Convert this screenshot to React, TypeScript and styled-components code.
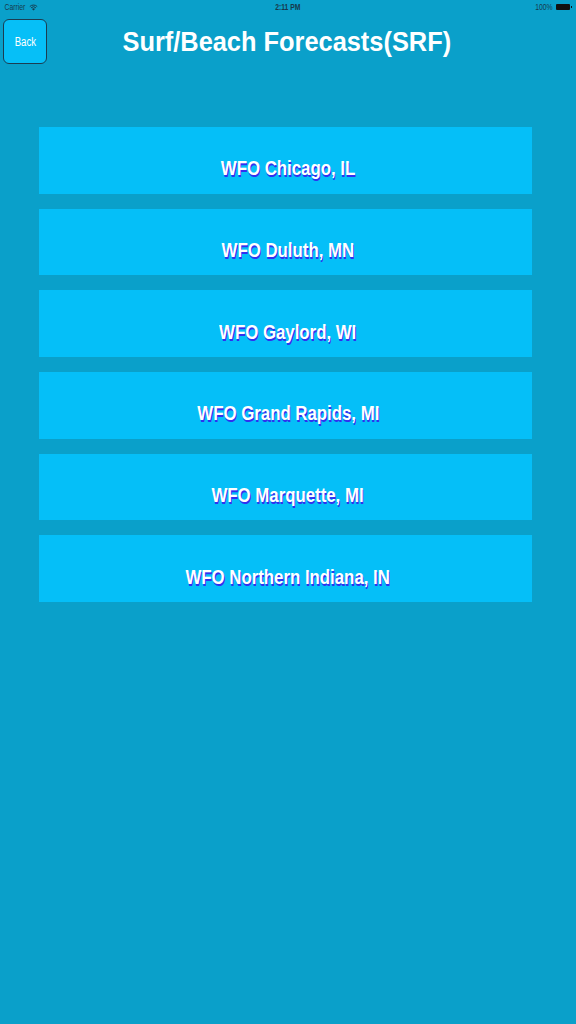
import React from "react";
import styled, { createGlobalStyle } from "styled-components";

const Global = createGlobalStyle`
  html, body { margin: 0; padding: 0; background: #0aa0ca; }
  #root { min-height: 1024px; }
`;

const Screen = styled.div`
  width: 576px;
  height: 1024px;
  background: #0aa0ca;
  font-family: "Liberation Sans", Arial, sans-serif;
  display: flex;
  flex-direction: column;
  overflow: hidden;
`;

const Squeeze = styled.span<{ $scale: number }>`
  display: inline-block;
  white-space: nowrap;
  transform: scaleX(${(p) => p.$scale});
  transform-origin: center;
`;

const StatusBar = styled.div`
  height: 14px;
  display: grid;
  grid-template-columns: 1fr auto 1fr;
  align-items: center;
  padding: 0 4px;
  font-size: 8.5px;
  color: #173a4c;
`;

const StatusLeft = styled.div`
  display: flex;
  align-items: center;
  gap: 1px;
  margin-left: -2px;
`;

const StatusCenter = styled.div`
  font-weight: bold;
`;

const StatusRight = styled.div`
  display: flex;
  justify-content: flex-end;
  align-items: center;
  gap: 1px;
`;

const Battery = styled.div`
  width: 14px;
  height: 6px;
  background: #111;
  border-radius: 1px;
  position: relative;
  margin-right: 2px;
  &::after {
    content: "";
    position: absolute;
    right: -2px;
    top: 2px;
    width: 1px;
    height: 2px;
    background: #111;
  }
`;

const Header = styled.div`
  height: 52px;
  display: flex;
  align-items: flex-start;
  padding: 5px 3px 0;
`;

const BackButton = styled.button`
  width: 44px;
  height: 45px;
  background: #06bff7;
  border: 1.5px solid #1b3d52;
  border-radius: 6px;
  color: #ffffff;
  font-family: "Liberation Sans", Arial, sans-serif;
  font-size: 12px;
  padding: 0;
  cursor: pointer;
`;

const Title = styled.h1`
  flex: 1;
  margin: 0;
  margin-right: 47px;
  padding-top: 8px;
  text-align: center;
  color: #ffffff;
  font-size: 27px;
  line-height: 30px;
  font-weight: bold;
`;

const List = styled.div`
  display: flex;
  flex-direction: column;
  gap: 15px;
  padding: 56px 44px 0 39px;
`;

const Row = styled.button`
  height: 66.7px;
  background: #05bff8;
  border: none;
  padding: 17px 0 0 5px;
  display: flex;
  align-items: center;
  justify-content: center;
  color: #ffffff;
  font-family: "Liberation Sans", Arial, sans-serif;
  font-size: 20px;
  font-weight: bold;
  text-shadow: 1px 2px 0 #3030f0;
  cursor: pointer;
`;

const offices = [
  "WFO Chicago, IL",
  "WFO Duluth, MN",
  "WFO Gaylord, WI",
  "WFO Grand Rapids, MI",
  "WFO Marquette, MI",
  "WFO Northern Indiana, IN",
];

export default function App() {
  return (
    <>
      <Global />
      <Screen>
        <StatusBar>
          <StatusLeft>
            <Squeeze $scale={0.8}>Carrier</Squeeze>
            <svg width="9" height="7" viewBox="0 0 10 8">
              <path d="M5 7.5 L3.3 5.6 A2.5 2.5 0 0 1 6.7 5.6 Z" fill="#173a4c" />
              <path d="M2.2 4.4 A4 4 0 0 1 7.8 4.4" stroke="#173a4c" strokeWidth="1.1" fill="none" />
              <path d="M0.8 2.9 A6 6 0 0 1 9.2 2.9" stroke="#173a4c" strokeWidth="1.1" fill="none" />
            </svg>
          </StatusLeft>
          <StatusCenter>
            <Squeeze $scale={0.8}>2:11 PM</Squeeze>
          </StatusCenter>
          <StatusRight>
            <Squeeze $scale={0.8}>100%</Squeeze>
            <Battery />
          </StatusRight>
        </StatusBar>
        <Header>
          <BackButton>
            <Squeeze $scale={0.8}>Back</Squeeze>
          </BackButton>
          <Title>
            <Squeeze $scale={0.94}>Surf/Beach Forecasts(SRF)</Squeeze>
          </Title>
        </Header>
        <List>
          {offices.map((o) => (
            <Row key={o}>
              <Squeeze $scale={0.84}>{o}</Squeeze>
            </Row>
          ))}
        </List>
      </Screen>
    </>
  );
}
